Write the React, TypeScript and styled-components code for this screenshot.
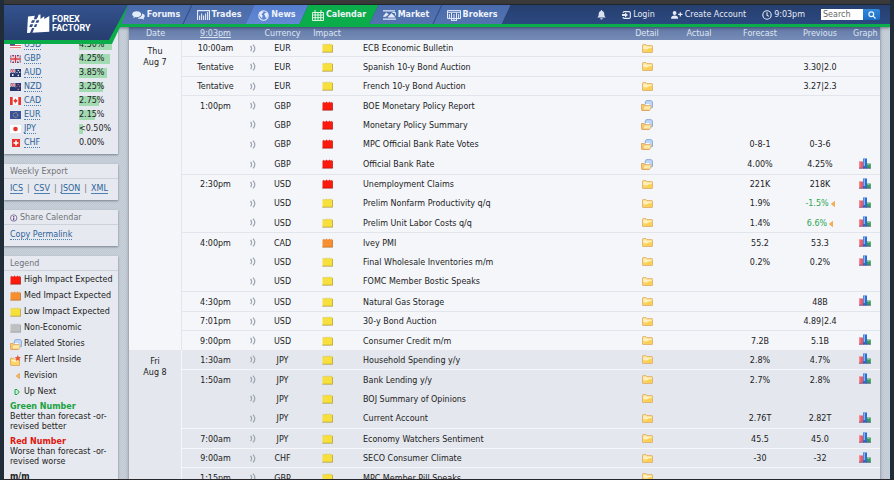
import React from "react";
import styled, { createGlobalStyle, css } from "styled-components";

const GlobalStyle = createGlobalStyle`
  * { box-sizing: border-box; }
  body {
    margin: 0;
    background: #1f2c38;
    color: #222;
    font: 8px/10px "DejaVu Sans", Verdana, sans-serif;
  }
  button, input { font: inherit; }
`;

const Page = styled.div`
  height: 100vh;
  display: flex;
  flex-direction: column;
  overflow: hidden;
  border: solid #202d39;
  border-width: 0 4px 1px;
  border-bottom-color: #26262b;
  background: #c4cdd6 repeating-conic-gradient(#c0c9d3 0 25%, #c9d1da 0 50%) 0 0 / 2px 2px;
`;

const TopStrip = styled.div`
  flex: none;
  height: 5px;
  margin: 0 -4px;
  background: #3a3a3a;
  border-bottom: 1px solid #24282f;
`;

const Header = styled.header`
  flex: none;
  position: relative;
  z-index: 3;
  display: flex;
  height: 22px;
  background: linear-gradient(#263f70, #2b487f);
  border-bottom: 3px solid #0aad49;
  box-shadow: 0 1px 3px rgba(20, 30, 60, 0.5);
`;

const LogoSlot = styled.div`
  flex: none;
  width: 120px;
`;

const LogoEdge = styled.div`
  position: absolute;
  z-index: 2;
  top: 0;
  left: 0;
  width: 125px;
  height: 39px;
  background: #0aad49;
  clip-path: polygon(0 0, 124px 0, 124px 1px, 117px 20px, 108px 39px, 0 39px);
`;

const LogoLink = styled.a`
  display: flex;
  align-items: center;
  gap: 2px;
  height: 35px;
  padding: 2px 0 0 23px;
  color: #fff;
  text-decoration: none;
  font: 700 9px/9px Roboto, sans-serif;
  background: linear-gradient(#34528e, #263e6f);
  clip-path: polygon(0 0, 124px 0, 105px 35px, 0 35px);
`;

const Tabs = styled.nav`
  display: flex;
`;

const Tab = styled.a<{ $tone: string; $width: number; $line?: boolean }>`
  position: relative;
  z-index: 1;
  display: flex;
  align-items: center;
  justify-content: center;
  gap: 2px;
  width: ${(p) => p.$width}px;
  height: 19px;
  padding-top: 1px;
  color: #eef3fb;
  font-weight: 700;
  text-decoration: none;
  &::before {
    content: "";
    position: absolute;
    z-index: -1;
    inset: 0;
    background: ${(p) => p.$tone};
    transform: skewX(-25deg);
    ${(p) => p.$line && css`border-right: 1px solid #35518c;`}
  }
  svg { flex: none; }
`;

const Tools = styled.div`
  display: flex;
  align-items: center;
  margin-left: auto;
  padding-right: 10px;
  gap: 16px;
`;

const Tool = styled.button`
  display: flex;
  align-items: center;
  gap: 2px;
  padding: 1px 0 0;
  border: 0;
  background: none;
  color: #e6ebf5;
  white-space: nowrap;
`;

const Search = styled.form`
  display: flex;
  height: 11px;
  width: 59px;
`;

const SearchInput = styled.input`
  flex: 1;
  min-width: 0;
  padding: 0 2px;
  border: 0;
  background: #fff;
  &::placeholder { color: #666; opacity: 1; }
`;

const SearchButton = styled.button`
  display: flex;
  align-items: center;
  justify-content: center;
  width: 17px;
  padding: 0;
  border: 0;
  border-radius: 0 2px 2px 0;
  background: linear-gradient(#3189dc, #1c6ec4);
`;

const Body = styled.div`
  flex: 1;
  min-height: 0;
  display: flex;
  align-items: flex-start;
  gap: 11px;
  padding-right: 10px;
`;

const Sidebar = styled.aside`
  flex: none;
  width: 114px;
  display: flex;
  flex-direction: column;
  gap: 10px;
`;

const Panel = styled.section`
  background: #e6e9ef;
  box-shadow: 0 1px 2px rgba(70, 80, 95, 0.6);
`;

const PanelTitle = styled.h2`
  display: flex;
  align-items: center;
  gap: 2px;
  height: 15px;
  margin: 0;
  padding: 2px 6px 0;
  color: #707278;
  font-size: 8px;
  font-weight: 400;
  border-bottom: 1px solid #ccd1da;
`;

const PanelBody = styled.div`
  display: flex;
  align-items: flex-start;
  gap: 4px;
  height: 21px;
  padding: 5px 6px 0;
  color: #777;
  white-space: nowrap;
`;

const Link = styled.a<{ $dotted?: boolean }>`
  color: #2c6299;
  line-height: 9px;
  text-decoration: none;
  border-bottom: 1px ${(p) => (p.$dotted ? "dotted" : "solid")} #4f80b2;
`;

const Rates = styled.ul`
  margin: 0;
  padding: 11px 6px 4px;
  list-style: none;
`;

const Rate = styled.li`
  display: grid;
  grid-template-columns: 14px 55px 1fr;
  align-items: center;
  justify-items: start;
  height: 14px;
  white-space: nowrap;
`;

const Meter = styled.span`
  position: relative;
  z-index: 0;
  line-height: 10px;
`;

const MeterBar = styled.span`
  position: absolute;
  z-index: -1;
  inset: 0 auto 0 0;
  background: #a2dab2;
`;

const LegendList = styled.ul`
  margin: 0;
  padding: 1px 6px 0;
  list-style: none;
`;

const LegendItem = styled.li`
  display: grid;
  grid-template-columns: 14px 1fr;
  align-items: center;
  height: 16px;
  white-space: nowrap;
`;

const Terms = styled.dl`
  margin: 0;
  padding: 2px 6px;
`;

const Term = styled.dt<{ $color: string }>`
  color: ${(p) => p.$color};
  font-weight: 700;
`;

const Meaning = styled.dd`
  margin: 0 0 5px;
  white-space: nowrap;
`;

const Main = styled.main`
  flex: 1;
  min-width: 0;
  box-shadow: 0 0 3px rgba(70, 80, 95, 0.7);
`;

const Table = styled.table`
  width: 100%;
  table-layout: fixed;
  border-collapse: separate;
  border-spacing: 0;
`;

const Col = styled.col<{ $width?: number }>`
  width: ${(p) => (p.$width ? `${p.$width}px` : "auto")};
`;

const HeadCell = styled.th<{ $end?: boolean }>`
  height: 13px;
  padding: ${(p) => (p.$end ? "1px 3px 0 0" : "1px 0 0")};
  background: linear-gradient(#647aa7, #758bb6);
  color: #dfe6f2;
  font-weight: 400;
  line-height: 12px;
  white-space: nowrap;
`;

const ClockLink = styled.a`
  color: inherit;
  text-decoration: underline;
`;

const Day = styled.tbody<{ $alt?: boolean }>`
  --line: ${(p) => (p.$alt ? "#f6f7fa" : "#e2e6ec")};
  background: ${(p) => (p.$alt ? "#e4e7ed" : "#f4f6fa")};
`;

const Row = styled.tr<{ $height: number }>`
  height: ${(p) => p.$height}px;
`;

const DateCell = styled.th`
  padding: 6px 0 0;
  border-right: 1px solid var(--line);
  font-weight: 400;
  line-height: 11px;
  vertical-align: top;
`;

const cellPadding = {
  text: "2px 0 0",
  event: "2px 0 0 17px",
  icon: "0",
  graph: "0 3px 2px 0",
};

const Cell = styled.td<{ $line: boolean; $kind?: keyof typeof cellPadding }>`
  padding: ${(p) => cellPadding[p.$kind ?? "text"]};
  border-top: ${(p) => (p.$line ? "1px solid var(--line)" : "0")};
  text-align: ${(p) => (p.$kind === "event" ? "left" : "center")};
  white-space: nowrap;
  svg { display: block; margin: 0 auto; }
`;

const Value = styled.span<{ $better?: boolean }>`
  display: flex;
  align-items: center;
  justify-content: center;
  gap: 2px;
  color: ${(p) => (p.$better ? "#2da650" : "inherit")};
  svg { margin: 0; }
`;

/* ---------- icons ---------- */

const impactTones: Record<string, [string, string]> = {
  high: ["#fb1a0d", "#a31208"],
  med: ["#f78f31", "#b5651c"],
  low: ["#f8e03c", "#a8922a"],
  none: ["#bfc0c2", "#8f9194"],
};

const Impact = ({ level }: { level: string }) => {
  const [fill, edge] = impactTones[level];
  return (
    <svg width="11" height="10" viewBox="0 0 11 10" aria-hidden="true">
      <path d="M.5 9V2.2L1.5 1 3 2 4.5.8 6 2 7.5.8 9 2 10 .8 10.5 2V9Z" fill={fill} />
      <path d="M.3 9.2H10.6V2" fill="none" stroke={edge} strokeWidth=".9" opacity=".8" />
      <path d="M.5 2.2L1.5 1 3 2 4.5.8 6 2 7.5.8 9 2 10 .8" fill="none" stroke={edge} strokeWidth=".5" opacity=".5" />
    </svg>
  );
};

const Sound = () => (
  <svg width="6" height="9" viewBox="0 0 6 9" fill="none" stroke="#9ba6b1" strokeWidth="1.2" aria-hidden="true">
    <path d="M.6 1.8Q2.6 4.5.6 7.2" />
    <path d="M3 .6Q6.6 4.5 3 8.4" />
  </svg>
);

const Folder = () => (
  <svg width="11" height="9" viewBox="0 0 11 9" aria-hidden="true">
    <path d="M.5 8V1.3Q.5.6 1.2.6H4L5 1.6H9.8Q10.5 1.6 10.5 2.3V8Q10.5 8.5 10 8.5H1Q.5 8.5.5 8Z" fill="#f9d568" stroke="#dfa869" strokeWidth=".8" />
    <path d="M1.3 5V1.6H3.9L4.9 2.6H9.7V4L6 4.4 5 5.4Z" fill="#fff1bd" />
    <path d="M4 6.2L9.4 4V7.8H3Z" fill="#fbcf45" opacity=".7" />
  </svg>
);

const Stories = () => (
  <svg width="12" height="11" viewBox="0 0 12 11" aria-hidden="true">
    <path d="M4.3 8V2L5.3.6H10.3L11.5 2V7.5L10 8Z" fill="#bdd6f6" stroke="#7d9fd3" strokeWidth=".8" />
    <path d="M.5 9.8V4.5H3L4 5.4H8.6V9.8Q8.6 10.5 8 10.5H1.1Q.5 10.5.5 9.8Z" fill="#f9cd68" stroke="#dc9d58" strokeWidth=".8" />
    <path d="M2.4 6.8L4 5.8H10.4L9 10H2Z" fill="#ffe9a6" stroke="#dc9d58" strokeWidth=".5" />
    <path d="M4.5 4.6H8.5" stroke="#fff" />
  </svg>
);

const Alert = () => (
  <svg width="12" height="11" viewBox="0 0 12 11" aria-hidden="true">
    <path d="M.5 10V3.3H3.5L4.5 4.3H9.5V10.5H1Z" fill="#f9d568" stroke="#dfa058" strokeWidth=".8" />
    <path d="M1.5 6V4.8H8.5V6L5 7Z" fill="#fff1bd" />
    <path d="M7.8 0L8.8 2 11 2.2 9.4 3.7 9.9 6 7.8 4.9 5.8 6 6.3 3.7 4.7 2.2 6.9 2Z" fill="#e8583a" />
  </svg>
);

const Graph = () => (
  <svg width="12" height="11" viewBox="0 0 12 11" aria-hidden="true">
    <rect x="0" y="3.5" width="4.5" height="7" fill="#ed5a61" />
    <path d="M.8 3.5V10.5" stroke="#f79a9d" />
    <rect x="7.5" y="5.5" width="4.3" height="5" fill="#3a9a55" />
    <path d="M8.5 6.5H10.5" stroke="#84c995" />
    <rect x="4" y=".5" width="4" height="10" fill="#2d6cd4" />
    <path d="M5.3 1V8" stroke="#80b7f5" strokeWidth="1.4" />
    <path d="M0 10.2H12" stroke="#4d4191" strokeWidth=".6" />
  </svg>
);

const Revised = () => (
  <svg width="4" height="6" viewBox="0 0 4 6" aria-hidden="true">
    <path d="M3.7.3V5.7L.3 3Z" fill="#f6b04d" stroke="#e8912d" strokeWidth=".5" />
  </svg>
);

const LegendRevised = () => (
  <svg width="12" height="8" viewBox="0 0 12 8" aria-hidden="true">
    <path d="M9.3 1.5V6.5L6.3 4Z" fill="#fbc273" stroke="#e8912d" strokeWidth=".8" />
  </svg>
);

const UpNext = () => (
  <svg width="12" height="8" viewBox="0 0 12 8" aria-hidden="true">
    <path d="M5 1.5H7L9.2 4 7 6.5H5Z" fill="#c5efcd" stroke="#25a548" />
  </svg>
);

const Info = () => (
  <svg width="8" height="8" viewBox="0 0 8 8" aria-hidden="true">
    <circle cx="3.7" cy="4" r="3.2" fill="#efeaf4" stroke="#84759b" />
    <path d="M3.7 2V3M3.7 3.6V6.2" stroke="#5c4780" strokeWidth="1.2" />
  </svg>
);

const Flag = ({ code }: { code: string }) => (
  <svg width="11" height="8" viewBox="0 0 11 8" aria-hidden="true">
    {code === "USD" && (
      <>
        <rect width="11" height="8" fill="#fff" />
        <path d="M0 .5H11M0 2.5H11M0 4.5H11M0 6.7H11" stroke="#e06060" />
        <rect width="5" height="4.5" fill="#3e5a9a" />
      </>
    )}
    {code === "GBP" && (
      <>
        <rect width="11" height="8" fill="#34509a" />
        <path d="M0 0L11 8M11 0L0 8" stroke="#fff" strokeWidth="1.6" />
        <path d="M0 0L11 8M11 0L0 8" stroke="#d8343f" strokeWidth=".6" />
        <path d="M5.5 0V8M0 4H11" stroke="#fff" strokeWidth="3" />
        <path d="M5.5 0V8M0 4H11" stroke="#d8343f" strokeWidth="1.5" />
      </>
    )}
    {(code === "AUD" || code === "NZD") && (
      <>
        <rect width="11" height="8" fill="#24376f" />
        <path d="M0 0L5.5 4M5.5 0L0 4" stroke="#dfe3ef" strokeWidth=".9" />
        <path d="M2.7 0V4M0 2H5.5" stroke="#fff" strokeWidth="1.4" />
        <path d="M2.7 0V4M0 2H5.5" stroke="#cf4352" strokeWidth=".8" />
        <g fill={code === "AUD" ? "#fff" : "#e26a74"}>
          <circle cx="8.2" cy="1.5" r=".7" />
          <circle cx="9.7" cy="3.3" r=".7" />
          <circle cx="7" cy="3.6" r=".6" />
          <circle cx="8.3" cy="6.4" r=".8" />
        </g>
        {code === "AUD" && <circle cx="2.8" cy="6" r=".9" fill="#fff" />}
      </>
    )}
    {code === "CAD" && (
      <>
        <rect width="11" height="8" fill="#fff" />
        <path d="M0 0H2.7V8H0ZM8.3 0H11V8H8.3Z" fill="#e8362f" />
        <path d="M5.5 1.2L6.2 2.6 7.6 3.2 6.6 5.2H5.8V6.6H5.2V5.2H4.4L3.4 3.2 4.8 2.6Z" fill="#e8362f" />
      </>
    )}
    {code === "EUR" && (
      <>
        <rect width="11" height="8" fill="#39529b" />
        <circle cx="5.5" cy="4" r="2.3" fill="none" stroke="#d6c96d" strokeWidth=".9" strokeDasharray=".8 .7" />
      </>
    )}
    {code === "JPY" && (
      <>
        <rect width="11" height="8" fill="#fff" />
        <circle cx="5.5" cy="4" r="2.3" fill="#e8322c" />
      </>
    )}
    {code === "CHF" && (
      <>
        <rect x="2" width="8" height="8" fill="#e8322c" />
        <path d="M6 1.5V6.5M3.5 4H8.5" stroke="#fff" strokeWidth="1.6" />
      </>
    )}
  </svg>
);

const LogoMark = () => (
  <svg width="23" height="20" viewBox="0 0 23 20" aria-hidden="true">
    <path
      d="M1 2.5L8 1.8V3.6H10.5L11.5.8 13.5.6V5L17.3 2.2V5L22.3 2V17.8L0 19Z"
      fill="#fff"
    />
    <g fill="#2f4b84">
      <path d="M8 1.2H11.3L9.6 5.2H6.8Z" />
      <path d="M5 6.2H8L6.9 8.8H3.9Z" />
      <path d="M9.6 6.2H12.4L11.3 8.8H8.5Z" />
      <path d="M3.4 10.3H6.2L5.1 13H2.3Z" />
      <path d="M7.9 10.3H10.3L9.2 13H6.8Z" />
      <path d="M5 14H7.3L5.4 19H3Z" />
    </g>
  </svg>
);

const ForumsIcon = () => (
  <svg width="13" height="9" viewBox="0 0 13 9" fill="#e4ecf9" aria-hidden="true">
    <path d="M4.7.3C7.2.3 9.2 1.6 9.2 3.3S7.2 6.2 4.7 6.2L3.5 6.1 1.2 7.3 1.8 5.5C.8 5 .2 4.2.2 3.3.2 1.6 2.2.3 4.7.3Z" />
    <path d="M10 2.5C11.7 2.9 12.8 3.9 12.8 5.1 12.8 5.9 12.3 6.6 11.6 7.1L12.2 8.7 10 7.8C8.2 8 6.4 7.6 5.5 6.9 8.3 6.7 10.4 5 10 2.5Z" />
  </svg>
);

const TradesIcon = () => (
  <svg width="13" height="10" viewBox="0 0 13 10" fill="none" stroke="#e4ecf9" aria-hidden="true">
    <path d="M.5 10V.7H12.5V10" strokeWidth="1.2" />
    <path d="M2.6 10V5.5M4.6 10V3.5M6.6 10V5.5M8.6 10V3.5M10.6 10V2" strokeWidth="1.1" />
  </svg>
);

const NewsIcon = () => (
  <svg width="11" height="11" viewBox="0 0 11 11" aria-hidden="true">
    <circle cx="5.5" cy="5.5" r="4.7" fill="none" stroke="#e8effc" strokeWidth="1.1" />
    <path d="M1.2 3L3.5 1.2 5.6 1.5 5 3 3.3 3.9 4.7 5.8 4 8.5 2.6 6.8 1.3 5.3ZM7 2.8L9 3 10 5 9.3 7.5 7.7 7.8 7.2 6 6.2 4.6Z" fill="#e8effc" />
  </svg>
);

const CalendarIcon = () => (
  <svg width="12" height="11" viewBox="0 0 12 11" fill="none" stroke="#dff7e5" aria-hidden="true">
    <path d="M.5 2.5H11.5V10.5H.5ZM.5 5H11.5M.5 7.7H11.5M3.2 2.5V10.5M6 2.5V10.5M8.8 2.5V10.5M3 0V3M9 0V3" />
  </svg>
);

const MarketIcon = () => (
  <svg width="13" height="10" viewBox="0 0 13 10" fill="none" stroke="#e4ecf9" aria-hidden="true">
    <path d="M0 .8H12M0 9.2H13" strokeWidth="1.3" />
    <path d="M.3 6.4L3.3 2.8 5.3 4.4 2.6 6.6ZM5 7.2L8.6 3.4 12 7.2Z" fill="#e4ecf9" strokeWidth=".6" />
    <path d="M9.5 2.5H12.4V5.5" />
  </svg>
);

const BrokersIcon = () => (
  <svg width="14" height="11" viewBox="0 0 14 11" fill="none" stroke="#e4ecf9" aria-hidden="true">
    <path d="M.5 8.5V.6H13.5V8.5ZM0 2.3H14M4.5 3V10.5M9.5 3V10.5M7 4V10" />
    <path d="M4 10.4H10M2.4 4V8M11.6 4V8" />
  </svg>
);

const BellIcon = () => (
  <svg width="9" height="10" viewBox="0 0 9 10" fill="#dbe2ef" aria-hidden="true">
    <path d="M4.5 0C5 0 5.2.4 5.2.9 6.8 1.3 7.3 2.6 7.3 4.2 7.3 6 8 6.6 8.8 7.5H.2C1 6.6 1.7 6 1.7 4.2 1.7 2.6 2.2 1.3 3.8.9 3.8.4 4 0 4.5 0ZM3.2 8.2H5.8C5.7 9.9 3.3 9.9 3.2 8.2Z" />
  </svg>
);

const LoginIcon = () => (
  <svg width="9" height="8" viewBox="0 0 9 8" aria-hidden="true">
    <path d="M1.2 2V1.6Q1.2.6 2.4.6H7Q8.3.6 8.3 1.8V6.2Q8.3 7.4 7 7.4H2.4Q1.2 7.4 1.2 6.4V6" fill="none" stroke="#e6ebf5" strokeWidth="1.1" />
    <path d="M0 2.9H3V1.4L6 4 3 6.6V5.1H0Z" fill="#e6ebf5" />
  </svg>
);

const AccountIcon = () => (
  <svg width="12" height="8" viewBox="0 0 12 8" fill="#e6ebf5" aria-hidden="true">
    <circle cx="3.6" cy="2" r="1.9" />
    <path d="M0 7.8C0 5.5 1.3 4.6 3.6 4.6S7.2 5.5 7.2 7.8Z" />
    <path d="M9.3 1.2V5.6M7.1 3.4H11.5" stroke="#e6ebf5" strokeWidth="1.2" />
  </svg>
);

const ClockIcon = () => (
  <svg width="10" height="10" viewBox="0 0 10 10" fill="none" stroke="#e6ebf5" strokeWidth="1.1" aria-hidden="true">
    <circle cx="5" cy="5" r="4.2" />
    <path d="M5 2.3V5.2L6.8 6.4" />
  </svg>
);

const SearchIcon = () => (
  <svg width="8" height="8" viewBox="0 0 8 8" fill="none" stroke="#eaf3ff" strokeWidth="1.2" aria-hidden="true">
    <circle cx="3.3" cy="3.3" r="2.4" />
    <path d="M5.2 5.2L7.5 7.5" />
  </svg>
);

/* ---------- data ---------- */

type Entry = {
  time?: string;
  cur: string;
  impact?: string;
  name: string;
  stories?: boolean;
  forecast?: string;
  previous?: string;
  revised?: boolean;
  graph?: boolean;
};

const thursday: Entry[] = [
  { time: "10:00am", cur: "EUR", name: "ECB Economic Bulletin" },
  { time: "Tentative", cur: "EUR", name: "Spanish 10-y Bond Auction", previous: "3.30|2.0" },
  { time: "Tentative", cur: "EUR", name: "French 10-y Bond Auction", previous: "3.27|2.3" },
  { time: "1:00pm", cur: "GBP", impact: "high", name: "BOE Monetary Policy Report", stories: true },
  { cur: "GBP", impact: "high", name: "Monetary Policy Summary", stories: true },
  { cur: "GBP", impact: "high", name: "MPC Official Bank Rate Votes", stories: true, forecast: "0-8-1", previous: "0-3-6" },
  { cur: "GBP", impact: "high", name: "Official Bank Rate", stories: true, forecast: "4.00%", previous: "4.25%", graph: true },
  { time: "2:30pm", cur: "USD", impact: "high", name: "Unemployment Claims", forecast: "221K", previous: "218K", graph: true },
  { cur: "USD", name: "Prelim Nonfarm Productivity q/q", forecast: "1.9%", previous: "-1.5%", revised: true, graph: true },
  { cur: "USD", name: "Prelim Unit Labor Costs q/q", forecast: "1.4%", previous: "6.6%", revised: true, graph: true },
  { time: "4:00pm", cur: "CAD", impact: "med", name: "Ivey PMI", forecast: "55.2", previous: "53.3", graph: true },
  { cur: "USD", name: "Final Wholesale Inventories m/m", forecast: "0.2%", previous: "0.2%", graph: true },
  { cur: "USD", name: "FOMC Member Bostic Speaks" },
  { time: "4:30pm", cur: "USD", name: "Natural Gas Storage", previous: "48B", graph: true },
  { time: "7:01pm", cur: "USD", name: "30-y Bond Auction", previous: "4.89|2.4" },
  { time: "9:00pm", cur: "USD", name: "Consumer Credit m/m", forecast: "7.2B", previous: "5.1B", graph: true },
];

const friday: Entry[] = [
  { time: "1:30am", cur: "JPY", name: "Household Spending y/y", forecast: "2.8%", previous: "4.7%", graph: true },
  { time: "1:50am", cur: "JPY", name: "Bank Lending y/y", forecast: "2.7%", previous: "2.8%", graph: true },
  { cur: "JPY", name: "BOJ Summary of Opinions" },
  { cur: "JPY", name: "Current Account", forecast: "2.76T", previous: "2.82T", graph: true },
  { time: "7:00am", cur: "JPY", name: "Economy Watchers Sentiment", forecast: "45.5", previous: "45.0", graph: true },
  { time: "9:00am", cur: "CHF", name: "SECO Consumer Climate", forecast: "-30", previous: "-32", graph: true },
  { time: "1:15pm", cur: "GBP", name: "MPC Member Pill Speaks" },
];

const rates: [string, number][] = [
  ["USD", 4.5], ["GBP", 4.25], ["AUD", 3.85], ["NZD", 3.25],
  ["CAD", 2.75], ["EUR", 2.15], ["JPY", 0.5], ["CHF", 0],
];

const tabs = [
  { label: "Forums", icon: <ForumsIcon />, tone: "linear-gradient(#4a6bab, #5373b0)", width: 64, line: true },
  { label: "Trades", icon: <TradesIcon />, tone: "linear-gradient(#4a6bab, #5373b0)", width: 62 },
  { label: "News", icon: <NewsIcon />, tone: "linear-gradient(#547dcd, #6489d4)", width: 54 },
  { label: "Calendar", icon: <CalendarIcon />, tone: "#0aad49", width: 70 },
  { label: "Market", icon: <MarketIcon />, tone: "linear-gradient(#4a6bab, #5373b0)", width: 64, line: true },
  { label: "Brokers", icon: <BrokersIcon />, tone: "linear-gradient(#4a6bab, #5373b0)", width: 68 },
];

const legend: [React.ReactNode, string][] = [
  [<Impact level="high" />, "High Impact Expected"],
  [<Impact level="med" />, "Med Impact Expected"],
  [<Impact level="low" />, "Low Impact Expected"],
  [<Impact level="none" />, "Non-Economic"],
  [<Stories />, "Related Stories"],
  [<Alert />, "FF Alert Inside"],
  [<LegendRevised />, "Revision"],
  [<UpNext />, "Up Next"],
];

/* Row heights run in a seven-row rhythm; the opening row is tucked under the head. */
const rowHeight = (i: number) => (i === 0 ? 16 : [0, 2, 4].includes(i % 7) ? 19 : 20);

const DayGroup = ({ day, date, entries, offset, alt }: {
  day: string; date: string; entries: Entry[]; offset: number; alt?: boolean;
}) => (
  <Day $alt={alt}>
    {entries.map((e, i) => {
      const line = i > 0 && !!e.time;
      return (
        <Row key={e.name} $height={rowHeight(i + offset)}>
          {i === 0 && (
            <DateCell scope="rowgroup" rowSpan={entries.length}>
              {day}<br />{date}
            </DateCell>
          )}
          <Cell $line={line}>{e.time}</Cell>
          <Cell $line={line} $kind="icon"><Sound /></Cell>
          <Cell $line={line}>{e.cur}</Cell>
          <Cell $line={line} $kind="icon"><Impact level={e.impact ?? "low"} /></Cell>
          <Cell $line={line} $kind="event">{e.name}</Cell>
          <Cell $line={line} $kind="icon">{e.stories ? <Stories /> : <Folder />}</Cell>
          <Cell $line={line} />
          <Cell $line={line}>{e.forecast}</Cell>
          <Cell $line={line}>
            <Value $better={e.revised}>{e.previous}{e.revised && <Revised />}</Value>
          </Cell>
          <Cell $line={line} $kind="graph">{e.graph && <Graph />}</Cell>
        </Row>
      );
    })}
  </Day>
);

export default function App() {
  return (
    <Page>
      <GlobalStyle />
      <TopStrip />
      <Header>
        <LogoSlot>
          <LogoEdge>
            <LogoLink href="#home">
              <LogoMark />
              <span>FOREX<br />FACTORY</span>
            </LogoLink>
          </LogoEdge>
        </LogoSlot>
        <Tabs>
          {tabs.map((t) => (
            <Tab key={t.label} href={`#${t.label}`} $tone={t.tone} $width={t.width} $line={t.line}>
              {t.icon}{t.label}
            </Tab>
          ))}
        </Tabs>
        <Tools>
          <Tool aria-label="Notifications"><BellIcon /></Tool>
          <Tool><LoginIcon />Login</Tool>
          <Tool><AccountIcon />Create Account</Tool>
          <Tool><ClockIcon />9:03pm</Tool>
          <Search>
            <SearchInput aria-label="Search" placeholder="Search" />
            <SearchButton type="button" aria-label="Run search"><SearchIcon /></SearchButton>
          </Search>
        </Tools>
      </Header>
      <Body>
        <Sidebar>
          <Panel>
            <Rates>
              {rates.map(([code, value]) => (
                <Rate key={code}>
                  <Flag code={code} />
                  <Link $dotted href={`#${code}`}>{code}</Link>
                  <Meter>
                    <MeterBar style={{ width: `${Math.round(value * 7.3)}px` }} />
                    {code === "JPY" && "<"}{value.toFixed(2)}%
                  </Meter>
                </Rate>
              ))}
            </Rates>
          </Panel>
          <Panel>
            <PanelTitle>Weekly Export</PanelTitle>
            <PanelBody>
              <Link href="#ics">ICS</Link>|<Link href="#csv">CSV</Link>|
              <Link href="#json">JSON</Link>|<Link href="#xml">XML</Link>
            </PanelBody>
          </Panel>
          <Panel>
            <PanelTitle><Info />Share Calendar</PanelTitle>
            <PanelBody><Link $dotted href="#permalink">Copy Permalink</Link></PanelBody>
          </Panel>
          <Panel>
            <PanelTitle>Legend</PanelTitle>
            <LegendList>
              {legend.map(([icon, label]) => (
                <LegendItem key={label}>{icon}{label}</LegendItem>
              ))}
            </LegendList>
            <Terms>
              <Term $color="#1aa341">Green Number</Term>
              <Meaning>Better than forecast -or-<br />revised better</Meaning>
              <Term $color="#e0160f">Red Number</Term>
              <Meaning>Worse than forecast -or-<br />revised worse</Meaning>
              <Term $color="#222">m/m</Term>
            </Terms>
          </Panel>
        </Sidebar>
        <Main>
          <Table>
            <colgroup>
              <Col $width={53} />
              <Col $width={67} />
              <Col $width={8} />
              <Col $width={51} />
              <Col $width={38} />
              <Col />
              <Col $width={36} />
              <Col $width={68} />
              <Col $width={54} />
              <Col $width={66} />
              <Col $width={27} />
            </colgroup>
            <thead>
              <tr>
                <HeadCell>Date</HeadCell>
                <HeadCell><ClockLink href="#time">9:03pm</ClockLink></HeadCell>
                <HeadCell />
                <HeadCell>Currency</HeadCell>
                <HeadCell>Impact</HeadCell>
                <HeadCell />
                <HeadCell>Detail</HeadCell>
                <HeadCell>Actual</HeadCell>
                <HeadCell>Forecast</HeadCell>
                <HeadCell>Previous</HeadCell>
                <HeadCell $end>Graph</HeadCell>
              </tr>
            </thead>
            <DayGroup day="Thu" date="Aug 7" entries={thursday} offset={0} />
            <DayGroup day="Fri" date="Aug 8" entries={friday} offset={thursday.length} alt />
          </Table>
        </Main>
      </Body>
    </Page>
  );
}
